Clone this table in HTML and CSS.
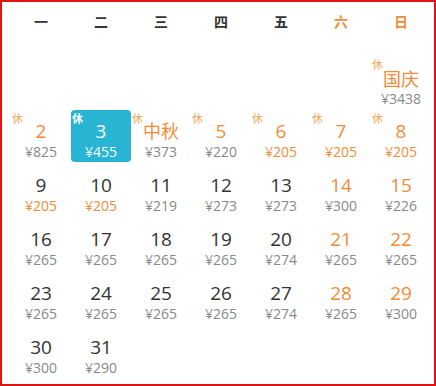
FILE: index.html
```html
<!DOCTYPE html>
<html lang="zh-CN">
<head>
<meta charset="utf-8">
<title>日历</title>
<link rel="stylesheet" href="styles.css">
</head>
<body>
<div class="cal">
  <div class="week head">
    <div class="wd">一</div><div class="wd">二</div><div class="wd">三</div><div class="wd">四</div><div class="wd">五</div><div class="wd we">六</div><div class="wd we">日</div>
  </div>
  <div class="week">
    <div class="cell"></div><div class="cell"></div><div class="cell"></div><div class="cell"></div><div class="cell"></div><div class="cell"></div>
    <div class="cell hol named fest"><span class="rest">休</span><div class="num name">国庆</div><div class="price">¥3438</div></div>
  </div>
  <div class="week">
    <div class="cell hol"><span class="rest">休</span><div class="num">2</div><div class="price">¥825</div></div>
    <div class="cell sel"><span class="rest">休</span><div class="num">3</div><div class="price">¥455</div></div>
    <div class="cell hol named"><span class="rest">休</span><div class="num name">中秋</div><div class="price">¥373</div></div>
    <div class="cell hol"><span class="rest">休</span><div class="num">5</div><div class="price">¥220</div></div>
    <div class="cell hol"><span class="rest">休</span><div class="num">6</div><div class="price low">¥205</div></div>
    <div class="cell hol"><span class="rest">休</span><div class="num">7</div><div class="price low">¥205</div></div>
    <div class="cell hol"><span class="rest">休</span><div class="num">8</div><div class="price low">¥205</div></div>
  </div>
  <div class="week">
    <div class="cell"><div class="num">9</div><div class="price low">¥205</div></div>
    <div class="cell"><div class="num">10</div><div class="price low">¥205</div></div>
    <div class="cell"><div class="num">11</div><div class="price">¥219</div></div>
    <div class="cell"><div class="num">12</div><div class="price">¥273</div></div>
    <div class="cell"><div class="num">13</div><div class="price">¥273</div></div>
    <div class="cell we"><div class="num">14</div><div class="price">¥300</div></div>
    <div class="cell we"><div class="num">15</div><div class="price">¥226</div></div>
  </div>
  <div class="week">
    <div class="cell"><div class="num">16</div><div class="price">¥265</div></div>
    <div class="cell"><div class="num">17</div><div class="price">¥265</div></div>
    <div class="cell"><div class="num">18</div><div class="price">¥265</div></div>
    <div class="cell"><div class="num">19</div><div class="price">¥265</div></div>
    <div class="cell"><div class="num">20</div><div class="price">¥274</div></div>
    <div class="cell we"><div class="num">21</div><div class="price">¥265</div></div>
    <div class="cell we"><div class="num">22</div><div class="price">¥265</div></div>
  </div>
  <div class="week">
    <div class="cell"><div class="num">23</div><div class="price">¥265</div></div>
    <div class="cell"><div class="num">24</div><div class="price">¥265</div></div>
    <div class="cell"><div class="num">25</div><div class="price">¥265</div></div>
    <div class="cell"><div class="num">26</div><div class="price">¥265</div></div>
    <div class="cell"><div class="num">27</div><div class="price">¥274</div></div>
    <div class="cell we"><div class="num">28</div><div class="price">¥265</div></div>
    <div class="cell we"><div class="num">29</div><div class="price">¥300</div></div>
  </div>
  <div class="week">
    <div class="cell"><div class="num">30</div><div class="price">¥300</div></div>
    <div class="cell"><div class="num">31</div><div class="price">¥290</div></div>
    <div class="cell"></div><div class="cell"></div><div class="cell"></div><div class="cell"></div><div class="cell"></div>
  </div>
</div>
</body>
</html>
```

FILE: styles.css
```css
html, body {
  margin: 0;
  padding: 0;
  background: #fff;
}

.cal {
  box-sizing: border-box;
  width: 436px;
  height: 386px;
  border: 2px solid #e01414;
  padding: 0 0 0 9px;
  font-family: "Open Sans", "Noto Sans CJK SC", sans-serif;
  display: flex;
  flex-direction: column;
  gap: 2px;
}

.week {
  display: grid;
  grid-template-columns: repeat(7, 60px);
}

.head {
  height: 52px;
  align-items: start;
}

.wd {
  text-align: center;
  font-family: "Noto Sans CJK SC", sans-serif;
  font-weight: bold;
  font-size: 14px;
  line-height: 20px;
  padding-top: 9px;
  color: #333;
}

.wd.we {
  color: #f08c38;
}

.cell {
  position: relative;
  height: 52px;
  box-sizing: border-box;
  padding-top: 10px;
  text-align: center;
  border-radius: 4px;
}

.num {
  font-size: 19px;
  line-height: 22px;
  color: #333;
}

.price {
  font-size: 14px;
  line-height: 20px;
  color: #888;
}

.named {
  padding-top: 7px;
}

.name {
  font-family: "Noto Sans CJK SC", sans-serif;
  font-size: 18px;
  line-height: 26px;
}

.named .price {
  line-height: 18px;
}

.fest {
  padding-top: 9px;
}

.fest .price {
  line-height: 16px;
}

.rest {
  position: absolute;
  left: 1px;
  top: 1px;
  font-family: "Noto Sans CJK SC", sans-serif;
  font-size: 11px;
  line-height: 14px;
  color: #f5a65b;
}

.hol .num,
.we .num,
.price.low {
  color: #f08c38;
}

.sel {
  background: #28b4d3;
}

.sel .num,
.sel .price,
.sel .rest {
  color: #fff;
}

.sel .rest {
  font-weight: bold;
}
```
